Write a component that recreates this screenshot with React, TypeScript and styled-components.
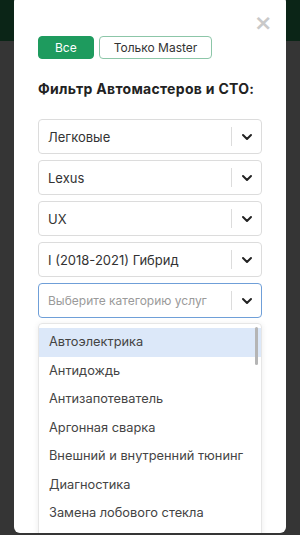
import React from 'react';
import styled, { createGlobalStyle } from 'styled-components';

const GlobalStyle = createGlobalStyle`
  html, body {
    margin: 0;
    padding: 0;
    width: 300px;
    height: 535px;
    overflow: hidden;
    font-family: Inter, "Noto Sans", "Noto Sans CJK SC", sans-serif;
  }
`;

const Page = styled.div`
  position: relative;
  width: 300px;
  height: 535px;
  background: #353535;
  overflow: hidden;
`;

const TopBar = styled.div`
  height: 41px;
  background: #0b2517;
`;

const Modal = styled.div`
  position: absolute;
  left: 14px;
  top: -4px;
  width: 272px;
  height: 537px;
  background: #fff;
  border-radius: 6px;
  box-sizing: border-box;
  padding: 40px 24px 0 24px;
  overflow: hidden;
`;

const Close = styled.button`
  position: absolute;
  right: 14px;
  top: 18px;
  width: 18px;
  height: 18px;
  padding: 0;
  border: none;
  background: none;
  color: #c9c9c9;
  font-size: 22px;
  font-weight: 700;
  line-height: 18px;
  font-family: "DejaVu Sans", sans-serif;
`;

const Tabs = styled.div`
  display: flex;
  gap: 5px;
`;

const Tab = styled.button<{ $active?: boolean }>`
  height: 23px;
  box-sizing: border-box;
  padding: 0 ${(p) => (p.$active ? '16px' : '14px')};
  border-radius: 4px;
  border: 1px solid ${(p) => (p.$active ? '#1e9b5e' : '#8cc6a8')};
  background: ${(p) => (p.$active ? '#1e9b5e' : '#fff')};
  color: ${(p) => (p.$active ? '#fff' : '#333')};
  font-family: Inter, sans-serif;
  font-size: 12px;
  line-height: 21px;
`;

const Title = styled.h3`
  margin: 21px 0 22px;
  font-size: 14px;
  font-weight: 700;
  color: #222;
  letter-spacing: 0.3px;
`;

const Selects = styled.div`
  display: flex;
  flex-direction: column;
  gap: 6px;
`;

const Control = styled.div<{ $focused?: boolean }>`
  display: flex;
  align-items: center;
  height: 35px;
  box-sizing: border-box;
  border: 1px solid ${(p) => (p.$focused ? '#6f9fd8' : '#dcdcdc')};
  border-radius: 4px;
  background: #fff;
`;

const Value = styled.div<{ $placeholder?: boolean }>`
  flex: 1;
  padding-left: 9px;
  font-size: ${(p) => (p.$placeholder ? '12px' : '13px')};
  color: ${(p) => (p.$placeholder ? '#9a9a9a' : '#333')};
  white-space: nowrap;
  overflow: hidden;
`;

const Separator = styled.span`
  width: 1px;
  align-self: stretch;
  margin: 7px 0;
  background: #dcdcdc;
`;

const Indicator = styled.div`
  width: 29px;
  display: flex;
  justify-content: center;
  align-items: center;
`;

const Menu = styled.div`
  position: relative;
  margin-top: 5px;
  border: 1px solid #e6e6e6;
  border-radius: 4px;
  box-shadow: 0 1px 6px rgba(0, 0, 0, 0.08);
  padding: 4px 0;
  height: 240px;
  overflow: hidden;
`;

const Option = styled.div<{ $active?: boolean }>`
  height: 28.5px;
  line-height: 28.5px;
  padding-left: 10px;
  font-size: 12.8px;
  color: #444;
  background: ${(p) => (p.$active ? '#dce8f9' : 'transparent')};
  white-space: nowrap;
`;

const Scrollbar = styled.div`
  position: absolute;
  right: 3px;
  top: 3px;
  width: 3px;
  height: 38px;
  border-radius: 2px;
  background: #b5b5b5;
`;

const Chevron = () => (
  <svg width="12" height="8" viewBox="0 0 12 8">
    <path d="M2 2l4 4 4-4" fill="none" stroke="#222" strokeWidth="2" strokeLinecap="round" strokeLinejoin="round" />
  </svg>
);

const selects = [
  { value: 'Легковые' },
  { value: 'Lexus' },
  { value: 'UX' },
  { value: 'I (2018-2021) Гибрид' },
  { value: 'Выберите категорию услуг', placeholder: true, focused: true }
];

const options = [
  'Автоэлектрика',
  'Антидождь',
  'Антизапотеватель',
  'Аргонная сварка',
  'Внешний и внутренний тюнинг',
  'Диагностика',
  'Замена лобового стекла'
];

const App: React.FC = () => (
  <Page>
    <GlobalStyle />
    <TopBar />
    <Modal>
      <Close aria-label="close">×</Close>
      <Tabs>
        <Tab $active>Все</Tab>
        <Tab>Только Master</Tab>
      </Tabs>
      <Title>Фильтр Автомастеров и СТО:</Title>
      <Selects>
        {selects.map((s) => (
          <Control key={s.value} $focused={s.focused}>
            <Value $placeholder={s.placeholder}>{s.value}</Value>
            <Separator />
            <Indicator>
              <Chevron />
            </Indicator>
          </Control>
        ))}
      </Selects>
      <Menu>
        {options.map((o, i) => (
          <Option key={o} $active={i === 0}>
            {o}
          </Option>
        ))}
        <Scrollbar />
      </Menu>
    </Modal>
  </Page>
);

export default App;
